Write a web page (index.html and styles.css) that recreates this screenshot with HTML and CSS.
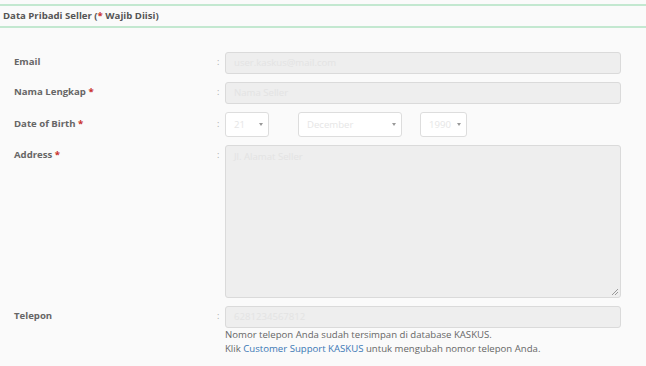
FILE: index.html
```html
<!DOCTYPE html>
<html lang="id">
<head>
<meta charset="utf-8">
<title>Data Pribadi Seller</title>
<link rel="stylesheet" href="styles.css">
</head>
<body>
<section class="panel">
  <h2 class="panel-head">Data Pribadi Seller (<span class="req">*</span> Wajib Diisi)</h2>
  <form class="form">
    <div class="row">
      <label class="label">Email</label>
      <span class="colon">:</span>
      <div class="field"><div class="input disabled">user.kaskus@mail.com</div></div>
    </div>
    <div class="row">
      <label class="label">Nama Lengkap <span class="req">*</span></label>
      <span class="colon">:</span>
      <div class="field"><div class="input disabled">Nama Seller</div></div>
    </div>
    <div class="row row-date">
      <label class="label">Date of Birth <span class="req">*</span></label>
      <span class="colon">:</span>
      <div class="field dates">
        <div class="select sel-day"><span class="sel-text">21</span><span class="caret"></span></div>
        <div class="select sel-month"><span class="sel-text">December</span><span class="caret"></span></div>
        <div class="select sel-year"><span class="sel-text">1990</span><span class="caret"></span></div>
      </div>
    </div>
    <div class="row">
      <label class="label">Address <span class="req">*</span></label>
      <span class="colon">:</span>
      <div class="field">
        <div class="input disabled textarea">Jl. Alamat Seller
          <svg class="grip" width="8" height="8" viewBox="0 0 8 8"><path d="M7 1L1 7M7 4L4 7" stroke="#999" stroke-width="1" fill="none"/></svg>
        </div>
      </div>
    </div>
    <div class="row">
      <label class="label">Telepon</label>
      <span class="colon">:</span>
      <div class="field">
        <div class="input disabled">6281234567812</div>
        <p class="help">Nomor telepon Anda sudah tersimpan di database KASKUS.<br>Klik <a href="#" class="link">Customer Support KASKUS</a> untuk mengubah nomor telepon Anda.</p>
      </div>
    </div>
  </form>
</section>
</body>
</html>
```

FILE: styles.css
```css
html, body {
  margin: 0;
  padding: 0;
  background: #fafafa;
}
body {
  font-family: "Open Sans", "Liberation Sans", sans-serif;
  color: #666;
  width: 646px;
  height: 366px;
  overflow: hidden;
}
.panel {
  padding-top: 4px;
}
.panel-head {
  margin: 0;
  border-top: 2px solid #c3e8d0;
  border-bottom: 2px solid #c3e8d0;
  height: 20px;
  line-height: 20px;
  padding-left: 3px;
  font-size: 9.6px;
  font-weight: 700;
  color: #555;
}
.req {
  color: #c9302c;
}
.form {
  margin: 24px 0 0 0;
  padding-left: 14px;
  display: flex;
  flex-direction: column;
  gap: 8px;
}
.row {
  display: grid;
  grid-template-columns: 203px 8px 396px;
  align-items: start;
}
.label {
  font-size: 9.6px;
  font-weight: 700;
  line-height: 19px;
  color: #666;
}
.colon {
  font-size: 9px;
  line-height: 20px;
  color: #aaa;
}
.row-date .label,
.row-date .colon {
  line-height: 23px;
}
.input {
  box-sizing: border-box;
  height: 22px;
  border: 1px solid #dadada;
  border-radius: 3px;
  padding: 0 8px;
  font-size: 9.6px;
  line-height: 20px;
  color: #e3e3e3;
}
.disabled {
  background: #eeeeee;
}
.textarea {
  position: relative;
  height: 153px;
  line-height: 22px;
}
.grip {
  position: absolute;
  right: 1px;
  bottom: 1px;
}
.dates {
  display: flex;
  gap: 0;
}
.select {
  box-sizing: border-box;
  height: 25px;
  background: #fff;
  border: 1px solid #dddddd;
  border-radius: 3px;
  display: flex;
  align-items: center;
  justify-content: space-between;
  padding: 0 5px 0 8px;
  font-size: 9.6px;
  color: #e6e6e6;
}
.sel-day { width: 44px; }
.sel-month { width: 104px; margin-left: 29px; }
.sel-year { width: 47px; margin-left: 18px; }
.caret {
  width: 0;
  height: 0;
  border-left: 2.5px solid transparent;
  border-right: 2.5px solid transparent;
  border-top: 3px solid #999;
}
.help {
  margin: 0;
  font-size: 9.6px;
  line-height: 14px;
  color: #666;
}
.link {
  color: #3a78b5;
  text-decoration: none;
}
```
